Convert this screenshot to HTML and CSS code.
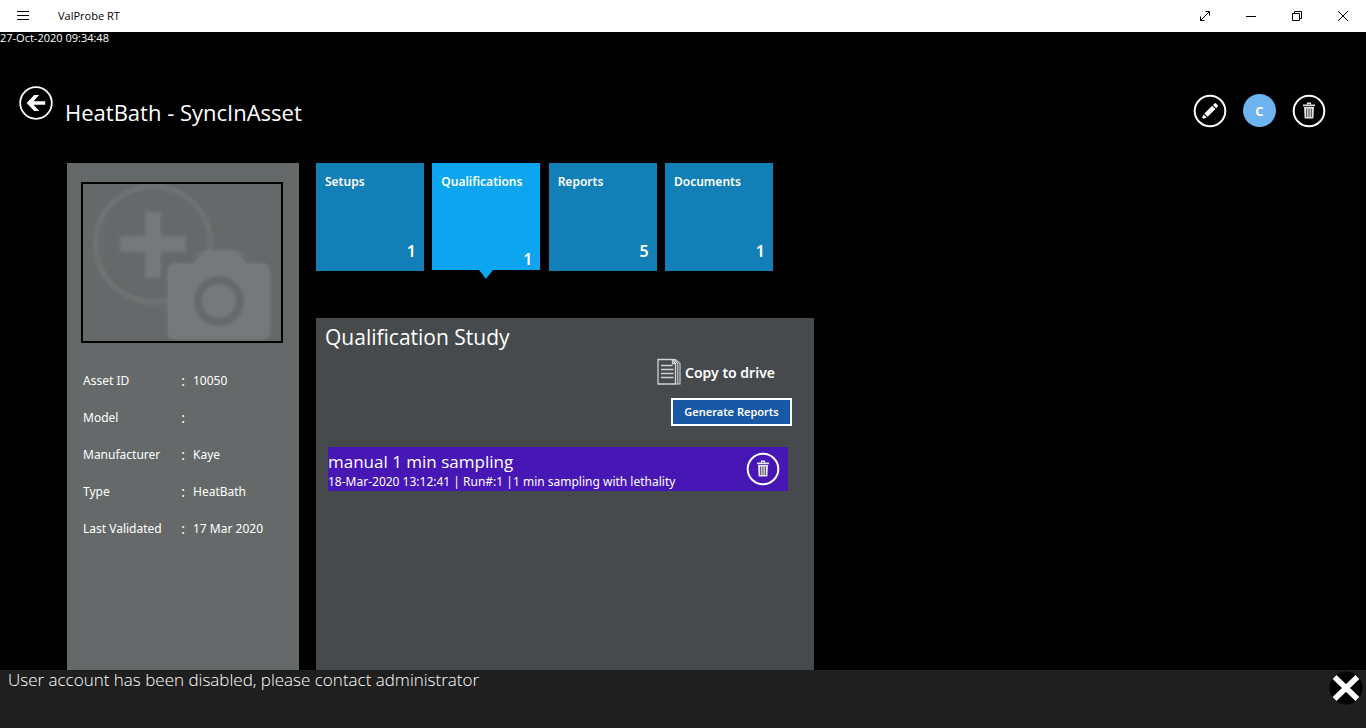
FILE: index.html
```html
<!DOCTYPE html>
<html lang="en">
<head>
<meta charset="utf-8">
<title>ValProbe RT</title>
<link rel="stylesheet" href="styles.css">
</head>
<body>
<svg class="defs" aria-hidden="true">
  <symbol id="trash" viewBox="0 0 34 34">
    <circle cx="17" cy="17" r="15.3" fill="none" stroke="currentColor" stroke-width="2"/>
    <path d="M15.500 10.500V9.200h3v1.300" fill="none" stroke="currentColor" stroke-width="1.200"/>
    <path d="M11 10.500h12v1.800H11zM12 13h10l-.6 11.500h-8.800z" fill="currentColor" opacity=".88"/>
    <path d="M14.700 14.500v8.500M17 14.500v8.500M19.300 14.500v8.500" class="slots" fill="none" stroke-width="0.900"/>
  </symbol>
</svg>
<header class="titlebar">
  <button class="win-btn menu" aria-label="Menu"><svg width="14" height="12" viewBox="0 0 14 12"><path d="M1 1.5h12M1 5.5h12M1 9.5h12" stroke="#000" fill="none"/></svg></button>
  <span class="app-name">ValProbe RT</span>
  <div class="win-controls">
    <button class="win-btn" aria-label="Full screen"><svg width="12" height="12" viewBox="0 0 12 12"><path d="M1.5 10.5l9-9M6.5 1.5h4v4M1.5 6.5v4h4" stroke="#000" fill="none"/></svg></button>
    <button class="win-btn" aria-label="Minimize"><svg width="12" height="12" viewBox="0 0 12 12"><path d="M1 6.5h10" stroke="#000" fill="none"/></svg></button>
    <button class="win-btn" aria-label="Restore"><svg width="12" height="12" viewBox="0 0 12 12"><path d="M1.5 3.5h7v7h-7zM3.5 3.5v-2h7v7h-2" stroke="#000" fill="none"/></svg></button>
    <button class="win-btn" aria-label="Close"><svg width="12" height="12" viewBox="0 0 12 12"><path d="M1 1l10 10M11 1L1 11" stroke="#000" fill="none"/></svg></button>
  </div>
</header>
<main class="page">
  <time class="clock">27-Oct-2020 09:34:48</time>
  <div class="heading">
    <button class="icon-btn back" aria-label="Back"><svg width="34" height="34" viewBox="0 0 34 34"><circle cx="17" cy="17" r="15.8" fill="none" stroke="#fff" stroke-width="1.8"/><path d="M7.600 17l7.600-8h5L14.600 15.200h11.600v3.600H14.600l5.600 6.200h-5z" fill="#fff"/></svg></button>
    <h1 class="title">HeatBath - SyncInAsset</h1>
    <div class="actions">
      <button class="icon-btn" aria-label="Edit"><svg width="34" height="34" viewBox="0 0 34 34"><circle cx="17" cy="17" r="15.3" fill="none" stroke="#fff" stroke-width="2"/><path d="M11.400 19.600l7.800-7.800 3.200 3.200-7.800 7.800zM20 11l1.300-1.300c.7-.7 1.500-.5 2 0l1.200 1.200c.5.500.6 1.300 0 2L23.200 14.200zM10.700 20.400l3.100 3.100-3.500 1.200-1.200-1.100z" fill="#fff"/></svg></button>
      <button class="avatar">C</button>
      <button class="icon-btn" aria-label="Delete asset"><svg width="34" height="34"><use href="#trash"/></svg></button>
    </div>
  </div>
  <div class="content">
    <aside class="asset">
      <button class="photo" aria-label="Add photo">
        <svg viewBox="0 0 198 157" width="198" height="157">
          <defs><filter id="soft"><feGaussianBlur stdDeviation="1.500"/></filter></defs>
          <g fill="#757979" filter="url(#soft)">
            <circle cx="70" cy="60" r="57.500" fill="none" stroke="#6f7373" stroke-width="5"/>
            <path d="M62 28h16v24h25v16H78v26H62V68H37V52h25z"/>
            <path d="M84 88q0-9 9-9h15q5 0 7-6 3-7 10-7h24q7 0 10 7 2 6 7 6h12q9 0 9 9v60q0 8-9 8H93q-9 0-9-8z"/>
            <circle cx="136" cy="117" r="21" fill="none" stroke="#656969" stroke-width="8"/>
          </g>
        </svg>
      </button>
      <dl class="facts">
        <div class="fact"><dt>Asset ID</dt><dd>10050</dd></div>
        <div class="fact"><dt>Model</dt><dd></dd></div>
        <div class="fact"><dt>Manufacturer</dt><dd>Kaye</dd></div>
        <div class="fact"><dt>Type</dt><dd>HeatBath</dd></div>
        <div class="fact"><dt>Last Validated</dt><dd>17 Mar 2020</dd></div>
      </dl>
    </aside>
    <div class="work">
      <nav class="tiles">
        <button class="tile"><span>Setups</span><span class="count">1</span></button>
        <button class="tile active"><span>Qualifications</span><span class="count">1</span></button>
        <button class="tile"><span>Reports</span><span class="count">5</span></button>
        <button class="tile"><span>Documents</span><span class="count">1</span></button>
      </nav>
      <section class="study">
        <h2 class="study-title">Qualification Study</h2>
        <button class="copy"><svg width="24" height="28" viewBox="0 0 24 28" fill="none" stroke="#d0d2d3"><path d="M1 1.500h14.500l3 4V26H1zM15.500 1.500v4h3" stroke-width="1.300"/><path d="M15.500 1.500h3l4.500 4V26h-4M17.500 2l3.300 4V26" stroke-width="1.100"/><path d="M4 7.500h11.500M4 11.500h12.500M4 15.500h12.500M4 19.500h12.500" stroke-width="1.400"/></svg>Copy to drive</button>
        <button class="generate">Generate Reports</button>
        <article class="run">
          <div class="run-text">
            <h3 class="run-name">manual 1 min sampling</h3>
            <p class="run-info">18-Mar-2020 13:12:41 | Run#:1 |1 min sampling with lethality</p>
          </div>
          <button class="icon-btn" aria-label="Delete run"><svg width="34" height="34"><use href="#trash"/></svg></button>
        </article>
      </section>
    </div>
  </div>
</main>
<footer class="notice" role="status">
  <p class="message">User account has been disabled, please contact administrator</p>
  <button class="icon-btn" aria-label="Dismiss"><svg width="34" height="34" viewBox="0 0 34 34"><circle cx="17" cy="17" r="16.500" fill="#000"/><path d="M5.500 6l23 22M28.500 6l-23 22" stroke="#fff" stroke-width="5.600"/></svg></button>
</footer>
</body>
</html>
```
FILE: styles.css
```css
* { box-sizing: border-box; margin: 0; }
body {
  display: flex;
  flex-direction: column;
  height: 100vh;
  background: #000;
  color: #fff;
  font-family: "Open Sans", "Noto Sans", sans-serif;
  font-size: 12px;
}
button { padding: 0; border: 0; background: none; color: inherit; font: inherit; }
svg { display: block; }
.defs { position: absolute; width: 0; height: 0; }
.slots { stroke: #333; }

.titlebar {
  display: flex;
  align-items: center;
  flex: none;
  height: 32px;
  background: #fff;
  color: #000;
}
.win-btn { display: grid; place-items: center; width: 46px; height: 32px; }
.app-name { margin-left: 12px; padding-bottom: 1px; font-size: 11px; }
.win-controls { display: flex; margin-left: auto; }

.page { display: flex; flex-direction: column; flex: 1; min-height: 0; }
.clock { height: 54px; line-height: 12px; font-size: 11px; }
.heading { display: flex; flex: none; height: 77px; padding: 0 40px 0 19px; }
.icon-btn { flex: none; width: 34px; height: 34px; }
.title { margin: 11px 0 0 12px; font-size: 22px; line-height: 30px; font-weight: 400; }
.actions { display: flex; gap: 16px; margin: 8px 0 0 auto; }
.avatar {
  width: 33px;
  height: 33px;
  border-radius: 50%;
  background: #6db3ee;
  font-size: 13px;
  font-weight: 700;
}

.content { display: flex; flex: 1; gap: 17px; min-height: 0; padding-left: 67px; }
.asset { width: 232px; padding: 19px 14px; background: #656969; }
.photo { display: block; width: 202px; height: 161px; border: 2px solid #000; overflow: hidden; }
.facts { padding: 19px 2px; font-family: "Noto Sans", sans-serif; font-size: 12px; line-height: 37px; }
.fact { display: flex; }
.fact dt { display: flex; justify-content: space-between; width: 102px; }
.fact dt::after { content: ":"; font-size: 14px; }
.fact dd { padding-left: 8px; }

.work { display: flex; flex-direction: column; width: 498px; }
.tiles { display: flex; justify-content: space-between; align-items: flex-start; width: 457px; height: 155px; }
.tile {
  display: flex;
  flex-direction: column;
  justify-content: space-between;
  width: 108px;
  height: 108px;
  padding: 10px 8px 11px 9px;
  background: #1280b6;
  font-family: "Noto Sans", sans-serif;
  font-size: 12px;
  line-height: 18px;
  font-weight: 600;
  text-align: left;
}
.count { align-self: flex-end; font-size: 16px; }
.tile.active { position: relative; height: 107px; padding-bottom: 2px; background: #0da5f0; }
.tile.active::after {
  content: "";
  position: absolute;
  top: 100%;
  left: 47px;
  border: 7px solid transparent;
  border-top: 9px solid #0da5f0;
  border-bottom: 0;
}
.study {
  display: flex;
  flex-direction: column;
  align-items: flex-end;
  flex: 1;
  padding: 4px 22px 0 9px;
  background: #464a4c;
}
.study-title { align-self: flex-start; font-size: 21px; line-height: 30px; font-weight: 400; }
.copy {
  display: flex;
  align-items: center;
  gap: 4px;
  height: 28px;
  margin: 6px 17px 12px 0;
  font-family: "Noto Sans", sans-serif;
  font-size: 14px;
  font-weight: 600;
}
.generate {
  width: 121px;
  height: 28px;
  padding-bottom: 2px;
  border: 2px solid #fff;
  background: #1858a6;
  font-family: "Noto Sans", sans-serif;
  font-size: 11px;
  font-weight: 600;
}
.run {
  display: flex;
  align-self: stretch;
  justify-content: space-between;
  height: 44px;
  margin: 21px 4px 0 3px;
  padding: 5px 8px 0 0;
  background: #4617b4;
}
.run-name { font-size: 17px; line-height: 20px; font-weight: 400; }
.run-info { font-family: "Noto Sans", sans-serif; font-size: 12px; line-height: 20px; white-space: nowrap; }

.notice {
  display: flex;
  justify-content: space-between;
  flex: none;
  height: 58px;
  padding: 1px 3px 0 8px;
  background: #1f1f1f;
}
.message { font-size: 17px; line-height: 18px; font-weight: 300; }
```
